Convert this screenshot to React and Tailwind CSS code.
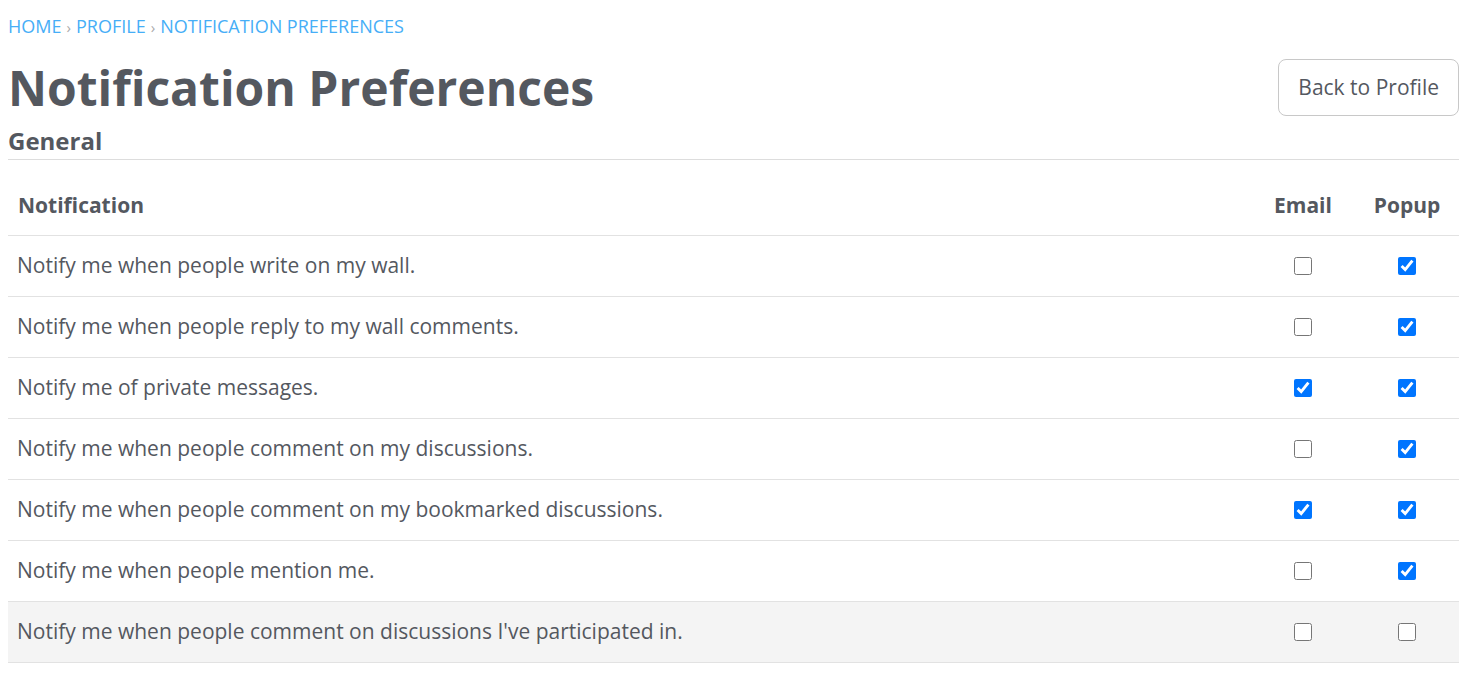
import React from "react";

const rows = [
  ["Notify me when people write on my wall.", false, true],
  ["Notify me when people reply to my wall comments.", false, true],
  ["Notify me of private messages.", true, true],
  ["Notify me when people comment on my discussions.", false, true],
  ["Notify me when people comment on my bookmarked discussions.", true, true],
  ["Notify me when people mention me.", false, true],
  ["Notify me when people comment on discussions I've participated in.", false, false],
];

function Box({ checked }) {
  return (
    <input
      type="checkbox"
      checked={checked}
      readOnly
      className="w-[18px] h-[18px] m-0 relative top-[-2px] align-middle accent-[#0075ff]"
    />
  );
}

export default function App() {
  return (
    <div className="bg-white min-h-[679px] px-2 pt-[13px] text-[#54585f]" style={{ fontFamily: '"Open Sans", sans-serif' }}>
      <nav className="text-[18px] leading-[27px] text-[#46aef7] uppercase">
        <span>Home</span>
        <span className="text-[#aaaaaa] text-[15px] mx-[5px]">›</span>
        <span>Profile</span>
        <span className="text-[#aaaaaa] text-[15px] mx-[5px]">›</span>
        <span>Notification Preferences</span>
      </nav>
      <div className="flex items-center justify-between mt-[18px]">
        <h1 className="text-[48px] leading-[1.2] font-bold m-0">Notification Preferences</h1>
        <button className="h-[57px] px-[19px] border border-[#c8c8c8] rounded-[8px] text-[21px] text-[#54585f] bg-white">
          Back to Profile
        </button>
      </div>
      <h2 className="text-[24px] font-bold leading-[32px] mt-[8px] pb-[2px] border-b border-[#dddddd]">General</h2>
      <table className="w-full mt-[16px] border-collapse text-[21px]">
        <thead>
          <tr className="border-b border-[#e2e2e2]">
            <th className="h-[60px] text-left font-bold px-[10px]">Notification</th>
            <th className="w-[104px] text-center font-bold">Email</th>
            <th className="w-[104px] text-center font-bold">Popup</th>
          </tr>
        </thead>
        <tbody>
          {rows.map(([label, email, popup], i) => (
            <tr key={i} className={"border-b border-[#e2e2e2] " + (i === rows.length - 1 ? "bg-[#f4f4f4]" : "")}>
              <td className="h-[61px] pl-[9px] pr-[10px]">{label}</td>
              <td className="text-center"><Box checked={email} /></td>
              <td className="text-center"><Box checked={popup} /></td>
            </tr>
          ))}
        </tbody>
      </table>
    </div>
  );
}
